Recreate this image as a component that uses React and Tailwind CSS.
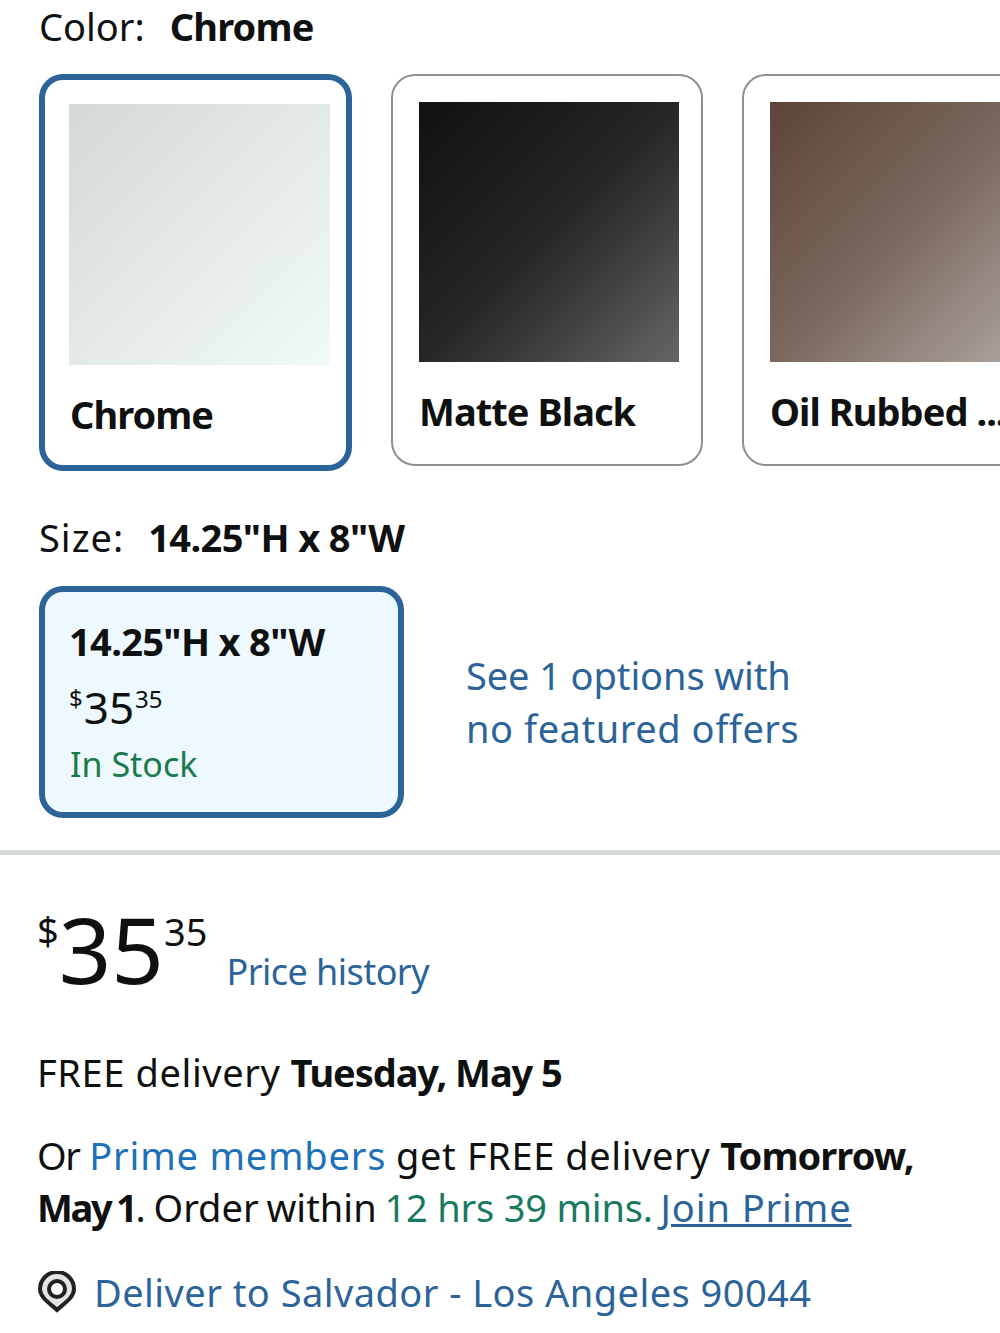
import React from 'react';

const font = 'font-["Noto_Sans",sans-serif]';

const swatches = [
  { name: 'Chrome', selected: true, img: 'h-[261px] w-[261px] bg-gradient-to-br from-[#d3d9d9] to-[#f2f9f9]' },
  { name: 'Matte Black', img: 'h-[260px] w-[260px] bg-gradient-to-br from-[#111111] via-[#262626] to-[#666666]' },
  { name: 'Oil Rubbed ...', img: 'h-[260px] w-[260px] bg-gradient-to-br from-[#5d4439] via-[#7b685e] to-[#aea8a3]' },
];

const Swatch = ({ name, selected, img }) => (
  <div
    className={
      selected
        ? 'h-[397px] w-[313px] shrink-0 rounded-[24px] border-[6px] border-[#2c6499] bg-white px-[24px] pt-[24px]'
        : 'h-[392px] w-[312px] shrink-0 rounded-[24px] border-2 border-[#8d9090] bg-white px-[26px] pt-[26px]'
    }
  >
    <div className={img} />
    <div className={`mt-[23px] whitespace-nowrap text-[38px] leading-[52px] font-bold tracking-[-0.95px] ${selected ? 'pl-[1px]' : ''}`}>
      {name}
    </div>
  </div>
);

export default function App() {
  return (
    <div className={`h-[1333px] w-[1000px] overflow-hidden bg-white text-[#0f1111] ${font}`}>
      <div className="px-[39px]">
        <div className="flex h-[52px] items-center gap-[25px] text-[38px]">
          <span>Color:</span>
          <span className="font-bold tracking-[-0.8px]">Chrome</span>
        </div>
        <div className="mt-[22px] flex w-[1200px] items-start gap-[39px]">
          {swatches.map((s) => (
            <Swatch key={s.name} {...s} />
          ))}
        </div>

        <div className="mt-[38px] flex h-[56px] items-center gap-[24px] text-[38px]">
          <span className="tracking-[1px]">Size:</span>
          <span className="font-bold tracking-[-0.6px]">14.25"H x 8"W</span>
        </div>
        <div className="mt-[21px] flex items-center gap-[62px]">
          <div className="h-[232px] w-[365px] rounded-[24px] border-[6px] border-[#2c6499] bg-[#edf8ff] px-[24px] pt-[24px]">
            <div className="text-[38px] leading-[50px] font-bold tracking-[-0.65px]">14.25"H x 8"W</div>
            <div className="mt-[19px] flex items-start leading-none">
              <span className="mt-[1px] text-[24px]">$</span>
              <span className="ml-[1px] text-[44px]">35</span>
              <span className="mt-[2px] ml-[1px] text-[24px]">35</span>
            </div>
            <div className="mt-[12px] ml-[1px] text-[34px] leading-[46px] text-[#197a4b]">In Stock</div>
          </div>
          <div className="text-[38px] leading-[53px] text-[#2c6499]">
            <span className="tracking-[-0.1px]">See 1 options with</span>
            <br />
            <span className="tracking-[0.55px]">no featured offers</span>
          </div>
        </div>
      </div>

      <div className="mt-[32px] h-[5px] bg-[#d5d9d9]" />

      <div className="px-[37px]">
        <div className="mt-[48px] flex items-end">
          <div className="flex items-start leading-none">
            <span className="mt-[8px] text-[38px]">$</span>
            <span className="text-[92px] leading-[92px]">35</span>
            <span className="mt-[9px] text-[38px]">35</span>
          </div>
          <a className="ml-[19px] text-[36px] leading-[46px] tracking-[-0.55px] text-[#2c6499]">Price history</a>
        </div>

        <p className="mt-[51px] text-[38px] leading-[53px]">
          <span className="tracking-[0.6px]">FREE delivery</span> <b className="tracking-[-1.05px]">Tuesday, May 5</b>
        </p>
        <p className="mt-[30px] text-[38px] leading-[52px]">
          <span className="tracking-[-1.5px]">Or</span>{' '}
          <span className="tracking-[0.8px] text-[#1d71b8]">Prime members</span>{' '}
          <span className="tracking-[0.6px]">get FREE delivery</span>{' '}
          <b className="tracking-[-0.95px]">Tomorrow,</b>
          <br />
          <b className="tracking-[-2.3px] [word-spacing:-2px]">May 1</b>
          <span className="[word-spacing:-2px]">. Order within</span>{' '}
          <span className="-ml-[2px] tracking-[-0.2px] text-[#197a5f]">12 hrs 39 mins.</span>{' '}
          <a className="-ml-[2px] tracking-[0.9px] text-[#2c6499] underline">Join Prime</a>
        </p>
        <div className="mt-[33px] flex items-center gap-[17px] text-[38px] leading-[52px] text-[#2c6499]">
          <svg width="40" height="42" viewBox="0 0 40 42" fill="none" className="shrink-0">
            <path d="M20 39 C14 33 3 27 3 18 A17 17 0 0 1 37 18 C37 27 26 33 20 39 Z" fill="#e4e4e4" stroke="#222" strokeWidth="4" />
            <circle cx="20" cy="18" r="8" fill="#fff" stroke="#222" strokeWidth="4" />
          </svg>
          <span className="tracking-[0.45px]">Deliver to Salvador - Los Angeles 90044</span>
        </div>
      </div>
    </div>
  );
}
